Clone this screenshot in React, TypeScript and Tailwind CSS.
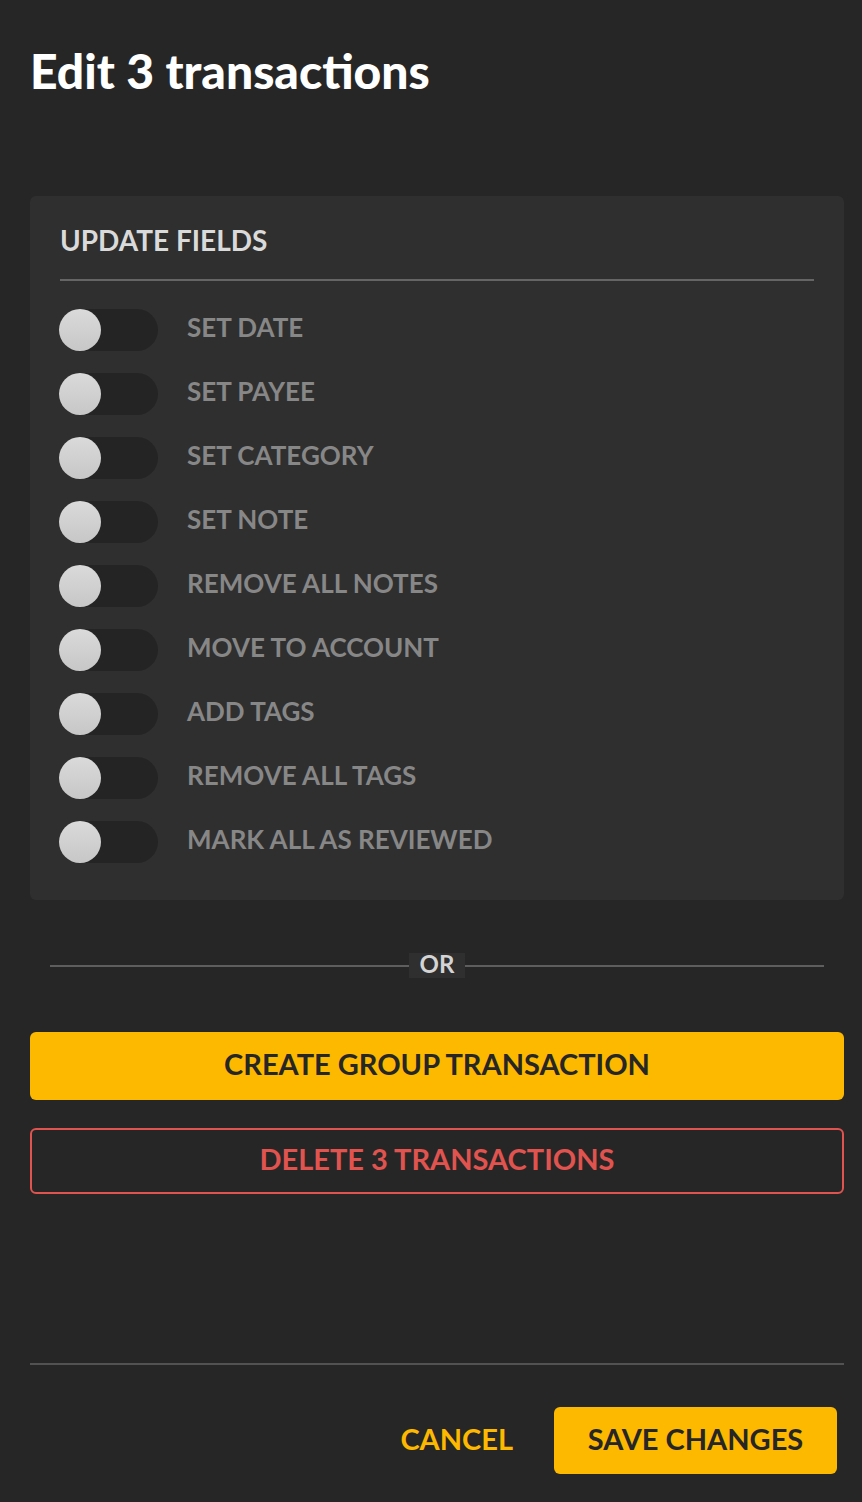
import React, { useState } from "react";

const FIELDS = [
  "SET DATE",
  "SET PAYEE",
  "SET CATEGORY",
  "SET NOTE",
  "REMOVE ALL NOTES",
  "MOVE TO ACCOUNT",
  "ADD TAGS",
  "REMOVE ALL TAGS",
  "MARK ALL AS REVIEWED",
];

function Toggle({ on, onChange }: { on: boolean; onChange: () => void }) {
  return (
    <button
      type="button"
      onClick={onChange}
      className="relative -ml-[1px] h-[42px] w-[99px] shrink-0 rounded-full bg-[#242424]"
    >
      <span
        className={
          "absolute top-0 h-[42px] w-[42px] rounded-full bg-gradient-to-b from-[#dadada] to-[#c7c7c7] " +
          (on ? "left-[57px]" : "left-0")
        }
      />
    </button>
  );
}

export default function App() {
  const [toggles, setToggles] = useState<boolean[]>(FIELDS.map(() => false));

  const flip = (i: number) =>
    setToggles(prev => prev.map((v, idx) => (idx === i ? !v : v)));

  return (
    <div
      className="min-h-screen bg-[#262626] pl-[30px] pr-[18px] pt-[45px] pb-[28px]"
      style={{ fontFamily: "Lato, 'Noto Sans', sans-serif" }}
    >
      <h1 className="text-[48px] leading-[52px] font-black text-white">
        Edit 3 transactions
      </h1>

      {/* update fields panel */}
      <div className="mt-[99px] rounded-md bg-[#2f2f2f] px-[30px] pt-[26px] pb-[37px]">
        <div className="border-b-2 border-[#656565] pb-[21px]">
          <h2 className="text-[28px] leading-[36px] font-bold text-[#dadada]">
            UPDATE FIELDS
          </h2>
        </div>

        <div className="mt-[28px] flex flex-col gap-[22px]">
          {FIELDS.map((label, i) => (
            <div key={label} className="flex h-[42px] items-center">
              <Toggle on={toggles[i]} onChange={() => flip(i)} />
              <span className="ml-[29px] pb-[6px] text-[26px] font-bold text-[#878787]">
                {label}
              </span>
            </div>
          ))}
        </div>
      </div>

      {/* or divider */}
      <div className="mt-[53px] flex items-center px-[20px]">
        <div className="h-[2px] flex-1 bg-[#5e5e5e]" />
        <span className="flex h-[25px] w-[56px] items-center justify-center bg-[#2f2f2f] pb-[3px] text-[24px] font-bold text-[#d4d4d4]">
          OR
        </span>
        <div className="h-[2px] flex-1 bg-[#5e5e5e]" />
      </div>

      <button
        type="button"
        className="mt-[54px] flex h-[68px] w-full items-center justify-center rounded-md bg-[#fdb800] pb-[4px] text-[29px] font-bold text-[#262626]"
      >
        CREATE GROUP TRANSACTION
      </button>

      <button
        type="button"
        className="mt-[28px] flex h-[66px] w-full items-center justify-center rounded-md border-2 border-[#e0534f] pb-[4px] text-[29px] font-bold text-[#e0534f]"
      >
        DELETE 3 TRANSACTIONS
      </button>

      {/* footer */}
      <div className="mt-[169px] h-[2px] bg-[#525252]" />
      <div className="mt-[42px] flex items-center justify-end gap-[41px] pr-[7px]">
        <button type="button" className="pb-[4px] text-[29px] font-bold text-[#fdb800]">
          CANCEL
        </button>
        <button
          type="button"
          className="flex h-[67px] w-[283px] items-center justify-center rounded-md bg-[#fdb800] pb-[4px] text-[29px] font-bold text-[#262626]"
        >
          SAVE CHANGES
        </button>
      </div>
    </div>
  );
}
